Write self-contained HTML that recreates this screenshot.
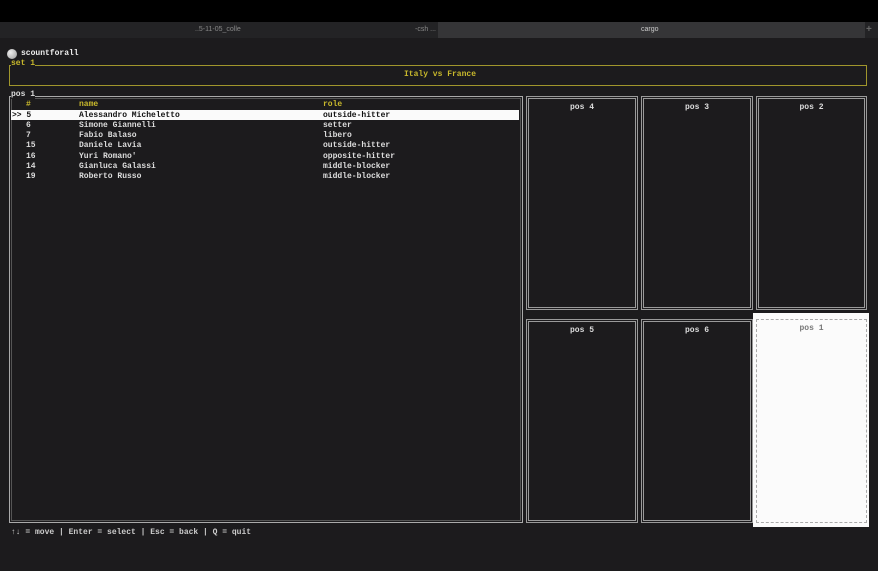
<!DOCTYPE html>
<html><head><style>
*{margin:0;padding:0;box-sizing:border-box}
body{width:878px;height:571px;background:#1c1b1d;position:relative;overflow:hidden;font-family:"Liberation Mono",monospace;font-size:8px;color:#ddd;font-weight:bold}
.a{position:absolute;white-space:pre}
.box{position:absolute;border:2px solid #9a9a9a;border-style:double;border-width:3px}
.y{color:#c9b92c}
.t{position:absolute;width:100%;text-align:center;top:4px}
</style></head><body>
<div class="a" style="left:0;top:0;width:878px;height:22px;background:#000"></div>
<div class="a" style="left:0;top:22px;width:878px;height:16px;background:#232325"></div>
<div class="a" style="left:438px;top:22px;width:427px;height:16px;background:#353537"></div>
<div class="a" style="left:195px;top:26px;font-family:'Liberation Sans';font-size:7px;color:#888;font-weight:normal">..5-11-05_colle</div>
<div class="a" style="left:415px;top:26px;font-family:'Liberation Sans';font-size:7px;color:#888;font-weight:normal">-csh ...</div>
<div class="a" style="left:641px;top:26px;font-family:'Liberation Sans';font-size:7px;color:#ccc;font-weight:normal">cargo</div>
<div class="a" style="left:866px;top:24px;font-family:'Liberation Sans';font-size:10px;color:#666">+</div>
<div class="a" style="left:7px;top:49px;width:10px;height:10px;border-radius:50%;background:radial-gradient(circle at 35% 35%,#eee,#999)"></div>
<div class="a" style="left:21px;top:49px;color:#eee">scountforall</div>
<div class="a" style="left:9px;top:65px;width:858px;height:21px;border:1px solid #a0962c"></div>
<div class="a y" style="left:11px;top:59px;background:#1c1b1d">set 1</div>
<div class="a y" style="left:404px;top:70px">Italy vs France</div>
<div class="a" style="left:9px;top:96px;width:514px;height:427px;border:1px solid #aaa;outline:1px solid #555;outline-offset:-3px"></div>
<div class="a" style="left:11px;top:90px;background:#1c1b1d">pos 1</div>
<div class="a y" style="left:26px;top:100px">#</div>
<div class="a y" style="left:79px;top:100px">name</div>
<div class="a y" style="left:323px;top:100px">role</div>
<div class="a" style="left:11px;top:110px;width:508px;height:10px;background:#fafafa"></div>
<div class="a" style="left:12px;top:111px;color:#111">&gt;&gt; 5</div>
<div class="a" style="left:79px;top:111px;color:#111">Alessandro Micheletto</div>
<div class="a" style="left:323px;top:111px;color:#111">outside-hitter</div>
<div class="a" style="left:26px;top:121px;line-height:10.2px">6
7
15
16
14
19</div>
<div class="a" style="left:79px;top:121px;line-height:10.2px">Simone Giannelli
Fabio Balaso
Daniele Lavia
Yuri Romano'
Gianluca Galassi
Roberto Russo</div>
<div class="a" style="left:323px;top:121px;line-height:10.2px">setter
libero
outside-hitter
opposite-hitter
middle-blocker
middle-blocker</div>
<div class="box" style="left:526px;top:96px;width:112px;height:214px"><div class="t">pos 4</div></div>
<div class="box" style="left:641px;top:96px;width:112px;height:214px"><div class="t">pos 3</div></div>
<div class="box" style="left:756px;top:96px;width:111px;height:214px"><div class="t">pos 2</div></div>
<div class="box" style="left:526px;top:319px;width:112px;height:204px"><div class="t">pos 5</div></div>
<div class="box" style="left:641px;top:319px;width:112px;height:204px"><div class="t">pos 6</div></div>
<div class="a" style="left:753px;top:313px;width:116px;height:214px;background:#fbfbfb"></div>
<div class="box" style="left:756px;top:319px;width:111px;height:204px;border-color:#aaa;border-style:dashed;border-width:1px"><div class="t" style="color:#777">pos 1</div></div>
<div class="a" style="left:11px;top:528px;color:#ccc">↑↓ = move | Enter = select | Esc = back | Q = quit</div>
</body></html>
